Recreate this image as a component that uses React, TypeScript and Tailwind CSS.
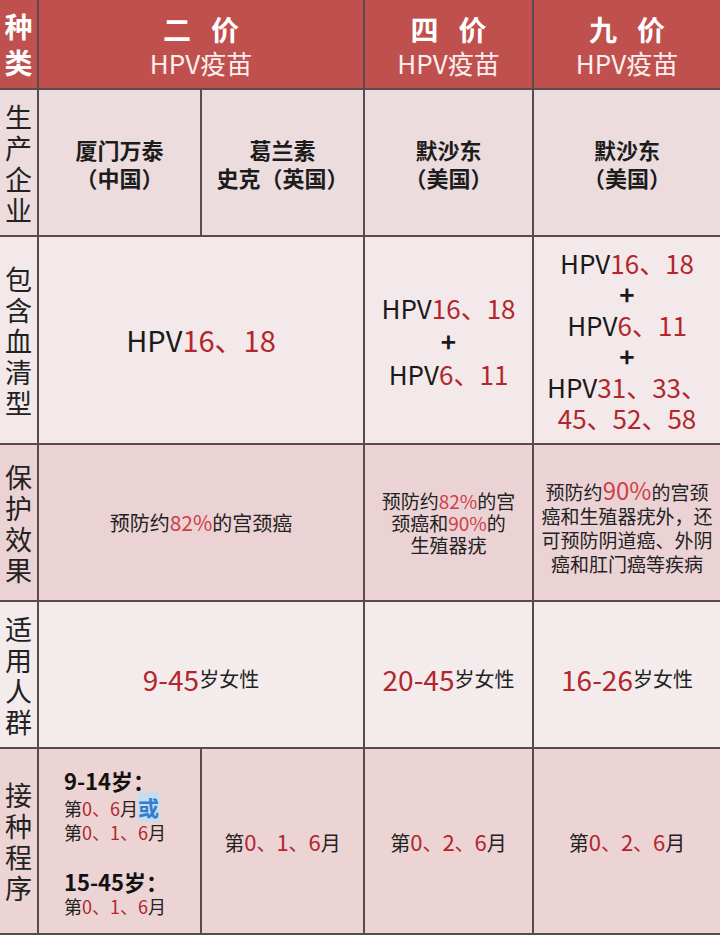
const FONT = "font-['Noto_Sans_CJK_SC','Noto_Sans',sans-serif]";

function Label({ text, bg }: { text: string; bg: string }) {
  return (
    <div className={`${bg} flex items-center justify-center text-[#222]`}>
      <p className="w-[27px] text-center text-[27px] leading-[31px] break-all">{text}</p>
    </div>
  );
}

function Header({ title, span }: { title: [string, string]; span?: boolean }) {
  return (
    <div
      className={`${span ? "col-span-2" : ""} flex flex-col items-center justify-center bg-[#c0504d] pt-1 text-white`}
    >
      <div className="flex gap-5 text-[28px] font-bold leading-[34px]">
        <span>{title[0]}</span>
        <span>{title[1]}</span>
      </div>
      <div className="text-[26px] leading-[34px] text-[#fbeeee]">HPV疫苗</div>
    </div>
  );
}

function Maker({ lines, bg }: { lines: string[]; bg: string }) {
  return (
    <div
      className={`${bg} flex flex-col items-center justify-center text-[22px] font-bold leading-[28px] text-[#1c1c1c]`}
    >
      {lines.map((l) => (
        <span key={l}>{l}</span>
      ))}
    </div>
  );
}

function Dose({ nums }: { nums: string[] }) {
  return (
    <span className="text-[20px] text-[#222]">
      第
      {nums.map((n, i) => (
        <span key={i}>
          <span className="text-[22px] text-[#b3262c]">{n}</span>
          {i < nums.length - 1 ? <span className="text-[#b3262c]">、</span> : null}
        </span>
      ))}
      月
    </span>
  );
}

export default function App() {
  const r2 = "bg-[#eddcdd]";
  const r3 = "bg-[#f3e9ea]";
  const r4 = "bg-[#ebd2d4]";
  const r5 = "bg-[#f4ebec]";
  const r6 = "bg-[#ecd3d4]";

  return (
    <div
      className={`${FONT} grid h-[935px] w-[720px] grid-cols-[37px_161px_161px_167px_1fr] grid-rows-[88px_145px_206px_155px_145px_1fr] gap-[2px] bg-[#5a4a4c] pb-[2px]`}
    >
      {/* header */}
      <div className="flex items-center justify-center bg-[#c0504d] text-white">
        <p className="w-[28px] text-center text-[28px] font-bold leading-[36px] break-all">种类</p>
      </div>
      <Header span title={["二", "价"]} />
      <Header title={["四", "价"]} />
      <Header title={["九", "价"]} />

      {/* makers */}
      <Label bg={r2} text="生产企业" />
      <Maker bg={r2} lines={["厦门万泰", "（中国）"]} />
      <Maker bg={r2} lines={["葛兰素", "史克（英国）"]} />
      <Maker bg={r2} lines={["默沙东", "（美国）"]} />
      <Maker bg={r2} lines={["默沙东", "（美国）"]} />

      {/* serotypes */}
      <Label bg={r3} text="包含血清型" />
      <div className={`${r3} col-span-2 flex items-center justify-center text-[29px] text-[#1a1a1a]`}>
        HPV<span className="text-[#b3262c]">16、18</span>
      </div>
      <div className={`${r3} flex flex-col items-center justify-center text-[26px] leading-[33px] text-[#1a1a1a]`}>
        <span>
          HPV<span className="text-[#b3262c]">16、18</span>
        </span>
        <span className="font-bold">+</span>
        <span>
          HPV<span className="text-[#b3262c]">6、11</span>
        </span>
      </div>
      <div className={`${r3} flex flex-col items-center justify-center text-[26px] leading-[31px] text-[#1a1a1a]`}>
        <span>
          HPV<span className="text-[#b3262c]">16、18</span>
        </span>
        <span className="font-bold">+</span>
        <span>
          HPV<span className="text-[#b3262c]">6、11</span>
        </span>
        <span className="font-bold">+</span>
        <span>
          HPV<span className="text-[#b3262c]">31、33、</span>
        </span>
        <span className="text-[#b3262c]">45、52、58</span>
      </div>

      {/* protection */}
      <Label bg={r4} text="保护效果" />
      <div className={`${r4} col-span-2 flex items-center justify-center text-[20px] text-[#222]`}>
        预防约<span className="text-[21px] text-[#cf3f47]">82%</span>的宫颈癌
      </div>
      <div className={`${r4} flex flex-col items-center justify-center text-[19px] leading-[22px] text-[#222]`}>
        <span>
          预防约<span className="text-[#cf3f47]">82%</span>的宫
        </span>
        <span>
          颈癌和<span className="text-[#cf3f47]">90%</span>的
        </span>
        <span>生殖器疣</span>
      </div>
      <div className={`${r4} flex flex-col items-center justify-center pt-2 text-[19px] leading-[24px] text-[#222]`}>
        <span>
          预防约<span className="text-[24px] text-[#cf3f47]">90%</span>的宫颈
        </span>
        <span>癌和生殖器疣外，还</span>
        <span>可预防阴道癌、外阴</span>
        <span>癌和肛门癌等疾病</span>
      </div>

      {/* population */}
      <Label bg={r5} text="适用人群" />
      <div className={`${r5} col-span-2 flex items-center justify-center pt-2 text-[20px] text-[#222]`}>
        <span className="text-[28px] text-[#b3262c]">9-45</span>岁女性
      </div>
      <div className={`${r5} flex items-center justify-center pt-2 text-[20px] text-[#222]`}>
        <span className="text-[28px] text-[#b3262c]">20-45</span>岁女性
      </div>
      <div className={`${r5} flex items-center justify-center pt-2 text-[20px] text-[#222]`}>
        <span className="text-[28px] text-[#b3262c]">16-26</span>岁女性
      </div>

      {/* schedule */}
      <Label bg={r6} text="接种程序" />
      <div className={`${r6} flex flex-col justify-center pl-[25px] text-[#222]`}>
        <span className="text-[22px] font-bold leading-[30px] text-[#111]">9-14岁：</span>
        <span className="text-[18px] leading-[24px]">
          第<span className="text-[#b3262c]">0、6</span>月
          <span className="bg-[#c6dcef] text-[21px] font-bold text-[#2f7fce]">或</span>
        </span>
        <span className="text-[18px] leading-[24px]">
          第<span className="text-[#b3262c]">0、1、6</span>月
        </span>
        <span className="h-[23px]" />
        <span className="text-[22px] font-bold leading-[28px] text-[#111]">15-45岁：</span>
        <span className="text-[18px] leading-[23px]">
          第<span className="text-[#b3262c]">0、1、6</span>月
        </span>
      </div>
      <div className={`${r6} flex items-center justify-center`}>
        <Dose nums={["0", "1", "6"]} />
      </div>
      <div className={`${r6} flex items-center justify-center`}>
        <Dose nums={["0", "2", "6"]} />
      </div>
      <div className={`${r6} flex items-center justify-center`}>
        <Dose nums={["0", "2", "6"]} />
      </div>
    </div>
  );
}
